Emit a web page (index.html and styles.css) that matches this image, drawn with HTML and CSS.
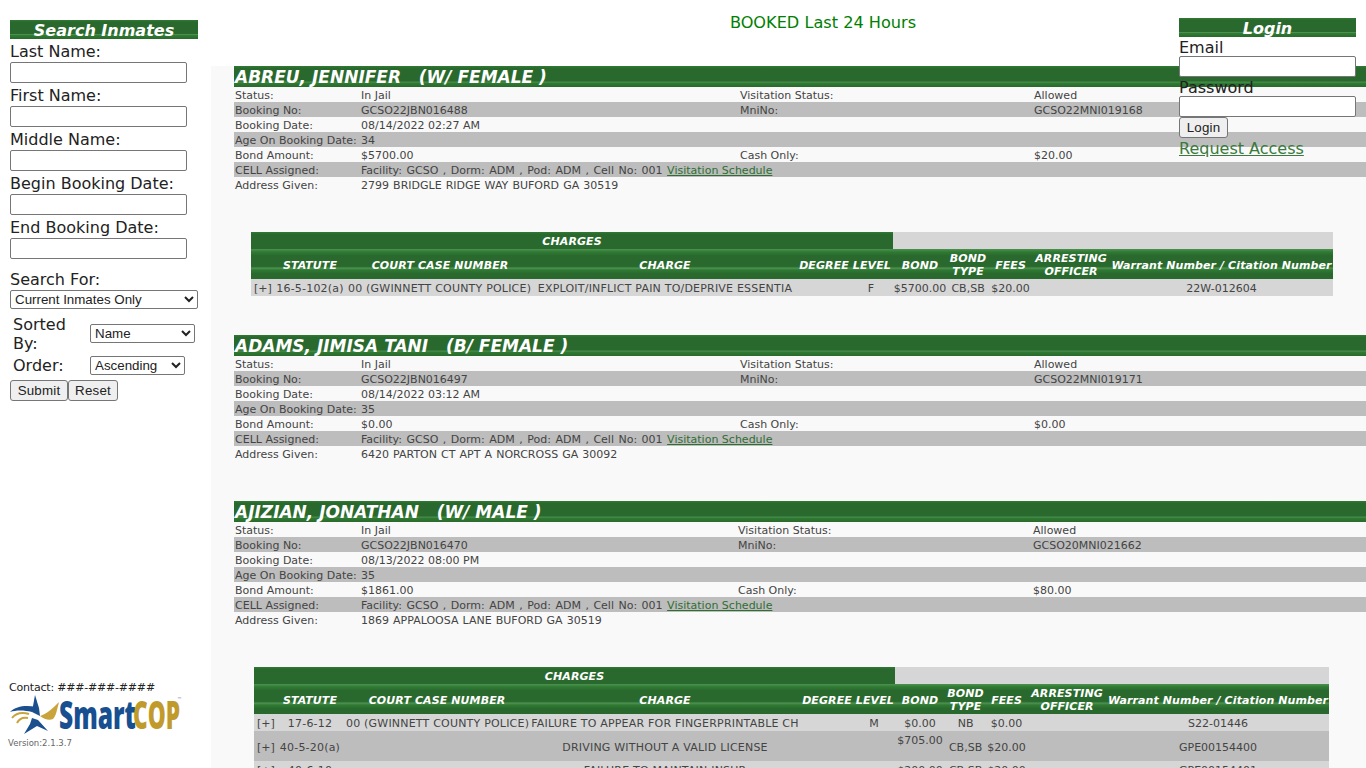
FILE: index.html
```html
<!DOCTYPE html>
<html lang="en">
<head>
    <meta charset="UTF-8">
    <meta name="viewport" content="width=device-width, initial-scale=1.0">
    <title>Booked Last 24 Hours</title>
    <link rel="stylesheet" href="styles.css">
</head>
<body>

    <div class="page">

        <!-- Search column -->
        <div class="sidebar">
            <form class="search-form">
                <div class="bar side-title">Search Inmates</div>
                <label class="field-label" for="lastName">Last Name:</label>
                <input class="text-input" type="text" id="lastName">
                <label class="field-label" for="firstName">First Name:</label>
                <input class="text-input" type="text" id="firstName">
                <label class="field-label" for="middleName">Middle Name:</label>
                <input class="text-input" type="text" id="middleName">
                <label class="field-label" for="beginDate">Begin Booking Date:</label>
                <input class="text-input" type="text" id="beginDate">
                <label class="field-label" for="endDate">End Booking Date:</label>
                <input class="text-input" type="text" id="endDate">

                <label class="field-label search-for" for="searchFor">Search For:</label>
                <select class="select-wide" id="searchFor">
                    <option>Current Inmates Only</option>
                </select>

                <div class="sort-row">
                    <label class="sort-label" for="sortedBy">Sorted By:</label>
                    <select class="select-name" id="sortedBy">
                        <option>Name</option>
                    </select>
                </div>
                <div class="sort-row order-row">
                    <label class="sort-label" for="order">Order:</label>
                    <select class="select-order" id="order">
                        <option>Ascending</option>
                    </select>
                </div>

                <div class="form-buttons">
                    <button type="button" class="btn btn-submit">Submit</button><button type="button" class="btn btn-reset">Reset</button>
                </div>
            </form>

            <div class="side-footer">
                <div class="contact">Contact: ###-###-####</div>
                <svg class="logo" width="172" height="42" viewBox="0 0 172 42">
                    <!-- star -->
                    <path fill="#1b4f8e" d="M25 1 L29 14 L30 22 L22 18 L23 12 Z"/>
                    <path fill="#1b4f8e" d="M22 24 L28 26 L38 37 L27 32 L14 40 L20 30 Z"/>
                    <path fill="#1b4f8e" d="M0 18 C6 12 16 11 26 13 L22 18 C14 16 6 16 0 18 Z"/>
                    <path fill="none" stroke="#c9a43c" stroke-width="2" d="M2 24 C6 19 12 18 19 20"/>
                    <path fill="none" stroke="#c9a43c" stroke-width="2" d="M7 29 C9 25 13 23 18 24"/>
                    <path fill="#c9a43c" d="M30 22 C37 20 43 14 49 8 C47 16 46 22 43 25 C39 27 34 25 30 22 Z"/>
                    <text class="logo-smart" transform="translate(49 35) scale(0.63 1)">Smart</text>
                    <text class="logo-cop" transform="translate(123 35) scale(0.58 1)">COP</text>
                    <text class="logo-tm" x="167" y="7">™</text>
                </svg>
                <div class="version">Version:2.1.3.7</div>
            </div>
        </div>

        <!-- Results column -->
        <div class="content">
            <div class="page-heading">BOOKED Last 24 Hours</div>

            <div class="results">

                <div class="person">
                    <div class="bar person-name">ABREU, JENNIFER   (W/ FEMALE )</div>
                    <div class="info-row"><span>Status:</span><span>In Jail</span><span>Visitation Status:</span><span>Allowed</span></div>
                    <div class="info-row"><span>Booking No:</span><span>GCSO22JBN016488</span><span>MniNo:</span><span>GCSO22MNI019168</span></div>
                    <div class="info-row"><span>Booking Date:</span><span>08/14/2022 02:27 AM</span></div>
                    <div class="info-row"><span>Age On Booking Date:</span><span>34</span></div>
                    <div class="info-row"><span>Bond Amount:</span><span>$5700.00</span><span>Cash Only:</span><span>$20.00</span></div>
                    <div class="info-row"><span>CELL Assigned:</span><span class="wide cell-text">Facility: GCSO , Dorm: ADM , Pod: ADM , Cell No: 001 <a href="#">Visitation Schedule</a></span></div>
                    <div class="info-row"><span>Address Given:</span><span class="wide address-text">2799 BRIDGLE RIDGE WAY BUFORD GA 30519</span></div>
                </div>

                <table class="charges charges-first">
                    <colgroup>
                        <col class="c1"><col class="c2"><col class="c3"><col class="c4"><col class="c5">
                        <col class="c6"><col class="c7"><col class="c8"><col class="c9"><col class="c10">
                    </colgroup>
                    <tr>
                        <th colspan="5" class="bar charges-title">CHARGES</th>
                        <td colspan="5" class="title-rest"></td>
                    </tr>
                    <tr class="head-row">
                        <th></th><th>STATUTE</th><th>COURT CASE NUMBER</th><th>CHARGE</th><th>DEGREE LEVEL</th>
                        <th>BOND</th><th>BOND TYPE</th><th>FEES</th><th>ARRESTING OFFICER</th><th class="nowrap">Warrant Number / Citation Number</th>
                    </tr>
                    <tr class="charge-row">
                        <td class="left">[+]</td><td>16-5-102(a)</td><td class="left">00 (GWINNETT COUNTY POLICE)</td>
                        <td class="nowrap">EXPLOIT/INFLICT PAIN TO/DEPRIVE ESSENTIA</td><td class="degree">F</td>
                        <td>$5700.00</td><td>CB,SB</td><td>$20.00</td><td></td><td>22W-012604</td>
                    </tr>
                </table>

                <div class="person">
                    <div class="bar person-name">ADAMS, JIMISA TANI   (B/ FEMALE )</div>
                    <div class="info-row"><span>Status:</span><span>In Jail</span><span>Visitation Status:</span><span>Allowed</span></div>
                    <div class="info-row"><span>Booking No:</span><span>GCSO22JBN016497</span><span>MniNo:</span><span>GCSO22MNI019171</span></div>
                    <div class="info-row"><span>Booking Date:</span><span>08/14/2022 03:12 AM</span></div>
                    <div class="info-row"><span>Age On Booking Date:</span><span>35</span></div>
                    <div class="info-row"><span>Bond Amount:</span><span>$0.00</span><span>Cash Only:</span><span>$0.00</span></div>
                    <div class="info-row"><span>CELL Assigned:</span><span class="wide cell-text">Facility: GCSO , Dorm: ADM , Pod: ADM , Cell No: 001 <a href="#">Visitation Schedule</a></span></div>
                    <div class="info-row"><span>Address Given:</span><span class="wide address-text">6420 PARTON CT APT A NORCROSS GA 30092</span></div>
                </div>

                <div class="person person-alt">
                    <div class="bar person-name">AJIZIAN, JONATHAN   (W/ MALE )</div>
                    <div class="info-row"><span>Status:</span><span>In Jail</span><span>Visitation Status:</span><span>Allowed</span></div>
                    <div class="info-row"><span>Booking No:</span><span>GCSO22JBN016470</span><span>MniNo:</span><span>GCSO20MNI021662</span></div>
                    <div class="info-row"><span>Booking Date:</span><span>08/13/2022 08:00 PM</span></div>
                    <div class="info-row"><span>Age On Booking Date:</span><span>35</span></div>
                    <div class="info-row"><span>Bond Amount:</span><span>$1861.00</span><span>Cash Only:</span><span>$80.00</span></div>
                    <div class="info-row"><span>CELL Assigned:</span><span class="wide cell-text">Facility: GCSO , Dorm: ADM , Pod: ADM , Cell No: 001 <a href="#">Visitation Schedule</a></span></div>
                    <div class="info-row"><span>Address Given:</span><span class="wide address-text">1869 APPALOOSA LANE BUFORD GA 30519</span></div>
                </div>

                <table class="charges charges-second">
                    <colgroup>
                        <col class="c1"><col class="c2"><col class="c3"><col class="c4"><col class="c5">
                        <col class="c6"><col class="c7"><col class="c8"><col class="c9"><col class="c10">
                    </colgroup>
                    <tr>
                        <th colspan="5" class="bar charges-title">CHARGES</th>
                        <td colspan="5" class="title-rest"></td>
                    </tr>
                    <tr class="head-row">
                        <th></th><th>STATUTE</th><th>COURT CASE NUMBER</th><th>CHARGE</th><th>DEGREE LEVEL</th>
                        <th>BOND</th><th>BOND TYPE</th><th>FEES</th><th>ARRESTING OFFICER</th><th class="nowrap">Warrant Number / Citation Number</th>
                    </tr>
                    <tr class="charge-row">
                        <td class="left">[+]</td><td>17-6-12</td><td class="left">00 (GWINNETT COUNTY POLICE)</td>
                        <td class="nowrap">FAILURE TO APPEAR FOR FINGERPRINTABLE CH</td><td class="degree">M</td>
                        <td>$0.00</td><td>NB</td><td>$0.00</td><td></td><td>S22-01446</td>
                    </tr>
                    <tr class="charge-row even">
                        <td class="left">[+]</td><td>40-5-20(a)</td><td></td>
                        <td class="nowrap">DRIVING WITHOUT A VALID LICENSE</td><td class="degree"></td>
                        <td>$705.00<br>&nbsp;</td><td>CB,SB</td><td>$20.00</td><td></td><td>GPE00154400</td>
                    </tr>
                    <tr class="charge-row">
                        <td class="left">[+]</td><td>40-6-10</td><td></td>
                        <td class="nowrap">FAILURE TO MAINTAIN INSUR</td><td class="degree"></td>
                        <td>$200.00</td><td>CB,SB</td><td>$20.00</td><td></td><td>GPE00154401</td>
                    </tr>
                </table>

            </div>
        </div>

        <!-- Login box sits over the results -->
        <form class="login">
            <div class="bar side-title login-title">Login</div>
            <label class="login-label" for="email">Email</label>
            <input class="login-input" type="text" id="email">
            <label class="login-label" for="password">Password</label>
            <input class="login-input" type="password" id="password">
            <button type="button" class="btn login-btn">Login</button>
            <a class="request-link" href="#">Request Access</a>
        </form>

    </div>

</body>
</html>
```

FILE: styles.css
```css
html, body {
    margin: 0;
    padding: 0;
    height: 100%;
    overflow: hidden;
    background-color: #fff;
}

body {
    font-family: "DejaVu Sans", Verdana, sans-serif;
    font-size: 11px;
    color: #444;
}

.page {
    position: relative;
    display: flex;
    height: 768px;
    overflow: hidden;
}

/* green strip used on every heading */
.bar {
    background-color: #2a692d;
    background-image: linear-gradient(to bottom, #2f7a33 0, #2a692d 12%, #2a692d 72%, #4c9150 76%, #2f7a33 82%, #2a692d 100%);
    color: #fff;
    font-weight: bold;
    font-style: italic;
}

/* Sidebar */
.sidebar {
    display: flex;
    flex-direction: column;
    width: 211px;
    flex: none;
}

.search-form {
    display: flex;
    flex-direction: column;
    align-items: flex-start;
    padding: 20px 0 0 10px;
}

.side-title {
    width: 188px;
    height: 19px;
    line-height: 22px;
    font-size: 16px;
    text-align: center;
}

.field-label {
    display: block;
    height: 23px;
    line-height: 25px;
    font-size: 16px;
    color: #222;
}

.text-input {
    box-sizing: border-box;
    width: 177px;
    height: 21px;
    margin: 0;
    border: 1px solid #767676;
    border-radius: 2px;
    background: #fff;
}

.field-label.search-for {
    height: 20px;
    line-height: 20px;
    margin-top: 11px;
}

.select-wide, .select-name, .select-order {
    box-sizing: border-box;
    height: 19px;
    margin: 0;
    font-family: "Liberation Sans", Arial, sans-serif;
    font-size: 13.33px;
    color: #222;
    background: #fff;
    border: 1px solid #767676;
    border-radius: 2px;
}

.select-wide {
    width: 188px;
}

.select-name {
    width: 105px;
    margin-top: -1px;
}

.select-order {
    width: 95px;
}

.sort-row {
    display: flex;
    align-items: center;
    margin: 6px 0 0 3px;
}

.sort-row.order-row {
    margin-top: 3px;
}

.sort-label {
    width: 77px;
    font-size: 16px;
    line-height: 19px;
    color: #222;
}

.form-buttons {
    display: flex;
    margin-top: 5px;
}

.btn {
    box-sizing: border-box;
    height: 21px;
    margin: 0;
    padding: 1px 0;
    font-family: "Liberation Sans", Arial, sans-serif;
    font-size: 13.33px;
    letter-spacing: 0.2px;
    color: #222;
    background: #efefef;
    border: 1px solid #767676;
    border-radius: 3px;
}

.btn-submit {
    width: 58px;
}

.btn-reset {
    width: 50px;
}

.side-footer {
    margin-top: auto;
    padding: 0 0 20px 9px;
}

.contact {
    line-height: 13px;
    letter-spacing: -0.2px;
    color: #222;
}

.logo {
    display: block;
    margin: 0 0 0 1px;
    overflow: visible;
}

.logo-smart, .logo-cop {
    font-family: "Open Sans", sans-serif;
    font-weight: 800;
    font-size: 39px;
}

.logo-smart {
    fill: #174f90;
}

.logo-cop {
    fill: #c19a2c;
}

.logo-tm {
    font-size: 5px;
    fill: #777;
}

.version {
    margin: 2px 0 0 -1px;
    font-size: 8.5px;
    color: #666;
}

/* Results */
.content {
    display: flex;
    flex-direction: column;
    flex: 1;
    min-width: 0;
}

.page-heading {
    flex: none;
    height: 66px;
    box-sizing: border-box;
    padding: 13px 0 0 69px;
    text-align: center;
    font-size: 16.15px;
    line-height: 20px;
    color: #008000;
}

.results {
    flex: none;
    min-height: 702px;
    padding-left: 23px;
    background-color: #f9f9f9;
}

.person {
    margin-bottom: 40px;
}

.person-name {
    height: 21px;
    line-height: 23px;
    padding-left: 1px;
    font-size: 17px;
    white-space: pre;
}

.info-row {
    display: grid;
    grid-template-columns: 126px 379px 294px 1fr;
    height: 15px;
    line-height: 17px;
    padding-left: 1px;
}

.info-row:nth-child(odd) {
    background-color: #bdbdbd;
}

.person-alt .info-row {
    grid-template-columns: 126px 377px 295px 1fr;
}

.wide {
    grid-column: 2 / -1;
}

.cell-text {
    word-spacing: 1px;
}

.address-text {
    word-spacing: 0.6px;
}

.info-row a {
    word-spacing: 0;
    color: #2f6f33;
}

/* Charges tables */
.charges {
    table-layout: fixed;
    border-collapse: collapse;
    margin-bottom: 39px;
}

.charges-first {
    width: 1082px;
    margin-left: 17px;
}

.charges-second {
    width: 1075px;
    margin-left: 20px;
}

.charges th, .charges td {
    padding: 3px 0 1px;
    line-height: 13px;
    text-align: center;
    vertical-align: middle;
}

.charges th {
    color: #fff;
    font-style: italic;
    font-weight: bold;
    letter-spacing: 0.1px;
}

.charges-first .c1 { width: 22px; }
.charges-first .c2 { width: 74px; }
.charges-first .c3 { width: 186px; }
.charges-first .c4 { width: 264px; }
.charges-first .c5 { width: 96px; }
.charges-first .c6 { width: 54px; }
.charges-first .c7 { width: 42px; }
.charges-first .c8 { width: 43px; }
.charges-first .c9 { width: 78px; }
.charges-first .c10 { width: 223px; }

.charges-second .c1 { width: 21px; }
.charges-second .c2 { width: 70px; }
.charges-second .c3 { width: 184px; }
.charges-second .c4 { width: 272px; }
.charges-second .c5 { width: 94px; }
.charges-second .c6 { width: 50px; }
.charges-second .c7 { width: 41px; }
.charges-second .c8 { width: 41px; }
.charges-second .c9 { width: 80px; }
.charges-second .c10 { width: 222px; }

.charges .charges-title {
    height: 13px;
    background-image: linear-gradient(to bottom, #2f7a33 0, #2a692d 14%, #2a692d 100%);
}

.title-rest {
    background-color: #d6d6d6;
}

.head-row {
    height: 30px;
    background-color: #2a692d;
    background-image: linear-gradient(to bottom, #4c9150 0, #2f7a33 10%, #2a692d 22%, #2a692d 58%, #4c9150 64%, #2f7a33 70%, #2a692d 82%);
}

.charge-row td {
    background-color: #d6d6d6;
}

.charge-row.even td {
    background-color: #bdbdbd;
}

.charge-row td:nth-child(-n+4) {
    letter-spacing: 0.2px;
}

.charges .left {
    text-align: left;
    padding-left: 1px;
    white-space: nowrap;
}

.charges .charge-row .left:first-child {
    padding-left: 3px;
    letter-spacing: 0;
}

.charges .degree {
    padding-left: 52px;
}

.nowrap {
    white-space: nowrap;
}

/* Login */
.login {
    position: absolute;
    top: 18px;
    left: 1179px;
    width: 177px;
    display: flex;
    flex-direction: column;
    align-items: flex-start;
}

.side-title.login-title {
    width: 177px;
}

.login-label {
    height: 19px;
    line-height: 21px;
    font-size: 16px;
    color: #222;
}

.login-input {
    box-sizing: border-box;
    width: 177px;
    height: 21px;
    margin: 0;
    border: 1px solid #767676;
    border-radius: 2px;
    background: #fff;
}

.login-btn {
    width: 49px;
}

.request-link {
    margin-top: 1px;
    font-size: 16px;
    line-height: 19px;
    color: #3a7a3e;
}
```
